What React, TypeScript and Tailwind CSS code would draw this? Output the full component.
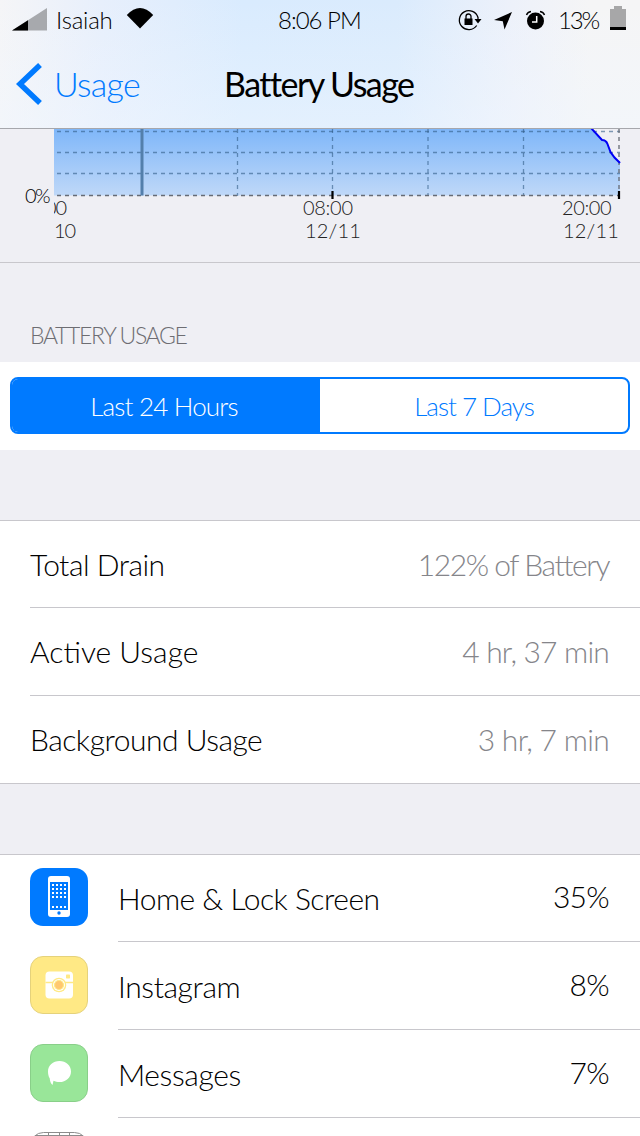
import React from "react";

const levels = [3.5, 24.5, 45.5];
const columns = [183.5, 278.5, 374, 469.5];

function StatusBar() {
  return (
    <div className="flex h-10 items-center text-[24px] font-light leading-10 text-black">
      <svg className="ml-3 mt-[-3px] h-6 w-[35px] shrink-0" viewBox="0 0 35 24">
        <path d="M0 23.500L35 1v22.500z" fill="#a7a9ad" />
        <path d="M0 23.500L16 13.200v10.300z" fill="#000" />
      </svg>
      <span className="ml-[9px] w-[70px] whitespace-nowrap tracking-[-0.2px]">Isaiah</span>
      <svg className="mt-[-4px] h-[22px] w-7 shrink-0" viewBox="0 0 28 22">
        <path d="M.8 8Q14-6 27.200 8L14 21.500z" fill="#000" />
      </svg>
      <span className="ml-[124px] w-[84px] whitespace-nowrap tracking-[-1px]">8:06 PM</span>
      <svg className="ml-[96px] h-6 w-6 shrink-0" viewBox="0 0 24 24" fill="none" stroke="#000" strokeWidth="1.300">
        <path d="M20 9.500a9.500 9.500 0 1 0-1.300 8M20 9v3" />
        <path d="M16.500 11h7L20 15.500z" fill="#000" stroke="none" />
        <path d="M6.500 10.500h8V17h-8z" fill="#000" stroke="none" />
        <path d="M8 11V8.500a2.500 2.500 0 0 1 5 0V11" />
      </svg>
      <svg className="ml-3 h-[19px] w-[19px] shrink-0" viewBox="0 0 19 19">
        <path d="M0 9L18 1 10.500 18.500 8.800 10.300z" fill="#000" />
      </svg>
      <svg className="ml-3 h-5 w-[21px] shrink-0" viewBox="0 0 21 20">
        <circle cx="10.500" cy="11" r="8.500" fill="#000" />
        <path d="M1.500 5Q2.500 2 6 1.500M19.500 5Q18.500 2 15 1.500" fill="none" stroke="#000" strokeWidth="1.400" />
        <path d="M11.700 6v6H7" fill="none" stroke="#fff" strokeWidth="1.500" />
      </svg>
      <span className="ml-[12px] w-[43px] whitespace-nowrap tracking-[-2.200px]">13%</span>
      <svg className="ml-[9px] mt-[-4px] h-6 w-4 shrink-0" viewBox="0 0 16 24">
        <path d="M4 0h8v3h4v18H0V3h4z" fill="#a7a7a8" />
        <path d="M0 21h16v3H0z" fill="#000" />
      </svg>
    </div>
  );
}

function Header() {
  return (
    <header className="h-[129px] border-b border-[#a6a7ac] bg-[linear-gradient(90deg,#f5f5f7_0%,#e7effc_16%,#d9ebfe_38%,#daebfd_62%,#edf1fa_80%,#f5f5f6_92%)]">
      <div className="h-[128px] bg-[linear-gradient(180deg,rgba(240,247,255,0),rgba(240,247,255,0.45))]">
        <StatusBar />
        <div className="flex h-[88px] items-start">
          <svg className="ml-4 mt-[22px] h-11 w-[27px] shrink-0" viewBox="0 0 27 44">
            <path d="M24 3L4 22l20 19" fill="none" stroke="#007aff" strokeWidth="5.500" />
          </svg>
          <span className="ml-[11px] mt-[20px] w-[170px] whitespace-nowrap text-[34px] font-light leading-[48px] tracking-[-0.700px] text-[#007aff]">Usage</span>
          <h1 className="mt-[20px] whitespace-nowrap text-[34px] font-normal leading-[48px] tracking-[-1.550px] text-black">Battery Usage</h1>
        </div>
      </div>
    </header>
  );
}

function Chart() {
  return (
    <section className="h-[134px] border-b border-[#c8c7cc] text-[20px] font-light text-black">
      <div className="flex h-[71px]">
        <div className="w-[54px] pl-[25px] pt-[54px] leading-6 tracking-[-1.500px]">0%</div>
        <svg className="h-[71px] w-[567px]" viewBox="0 0 567 71">
          <defs>
            <linearGradient id="area" x1="0" y1="0" x2="0" y2="1">
              <stop offset="0" stopColor="#7fb7f9" />
              <stop offset="1" stopColor="#bfd8f8" />
            </linearGradient>
          </defs>
          <path d="M0 0H537L548 11 552 12.500 557 23 561 28 566 34V66.500H0z" fill="url(#area)" />
          <g stroke="#315b85" strokeOpacity=".6" strokeWidth="1.300" strokeDasharray="4 4" fill="none">
            {levels.map((y) => <path key={y} d={`M3 ${y - 1}H566`} />)}
            {columns.map((x) => <path key={x} d={`M${x} 0V67`} />)}
          </g>
          <path d="M3 66.500H566M565 0V66" stroke="#666b75" strokeWidth="1.300" strokeDasharray="4 4" fill="none" />
          <path d="M88 0V66.500" stroke="#537fab" strokeWidth="3" />
          <path d="M537 -1L548 11q4 0 5.500 4l3 8 4 5.500L566 34" fill="none" stroke="#0000f5" strokeWidth="2" />
          <path d="M278.500 62v8M565 62v8" stroke="#000" strokeWidth="2.200" />
        </svg>
      </div>
      <div className="ml-[54px] mt-[-4px] flex overflow-hidden whitespace-nowrap leading-[23px] text-[#222]">
        <div className="w-[249px] shrink-0 tracking-[-1px]">
          <div className="ml-[-9px]">00</div>
          <div>10</div>
        </div>
        <div className="w-[259px] shrink-0">
          <div className="tracking-[-0.300px]">08:00</div>
          <div className="ml-[2px] tracking-[0.200px]">12/11</div>
        </div>
        <div>
          <div className="tracking-[-0.400px]">20:00</div>
          <div className="ml-px tracking-[0.200px]">12/11</div>
        </div>
      </div>
    </section>
  );
}

function Segments() {
  return (
    <div className="bg-white px-[10px] pb-4 pt-[15px]">
      <div className="flex h-[57px] overflow-hidden rounded-lg border-2 border-[#007aff] text-center text-[26px] font-light leading-[52px]">
        <button className="w-[308px] bg-[#007aff] pr-1 tracking-[-0.800px] text-white">Last 24 Hours</button>
        <button className="flex-1 tracking-[-1px] text-[#007aff]">Last 7 Days</button>
      </div>
    </div>
  );
}

const stats = [
  { label: "Total Drain", value: "122% of Battery", labelStyle: "tracking-[-0.500px]", valueStyle: "tracking-[-1.450px]" },
  { label: "Active Usage", value: "4 hr, 37 min", labelStyle: "tracking-[0px]", valueStyle: "tracking-[-0.800px]" },
  { label: "Background Usage", value: "3 hr, 7 min", labelStyle: "tracking-[-0.500px]", valueStyle: "tracking-[-0.700px]" },
];

function Stats() {
  return (
    <section className="border-y border-[#c8c7cc] bg-white pl-[30px]">
      {stats.map(({ label, value, labelStyle, valueStyle }) => (
        <div key={label} className="flex h-[88px] items-center justify-between whitespace-nowrap border-b border-[#c8c7cc] pr-[31px] text-[30px] font-light first:h-[87px] last:h-[87px] last:border-0">
          <span className={`text-black ${labelStyle}`}>{label}</span>
          <span className={`text-[#85858a] ${valueStyle}`}>{value}</span>
        </div>
      ))}
    </section>
  );
}

function PhoneIcon() {
  return (
    <svg className="h-[58px] w-[58px]" viewBox="0 0 58 58">
      <rect width="58" height="58" rx="13" fill="#007aff" />
      <rect x="18" y="8" width="22" height="41" rx="3" fill="#fff" />
      <path d="M20 14h18v28H20z" fill="#007aff" />
      <path d="M22 17h14M22 21h14M22 25h14M22 29h14M22 39h14" stroke="#fff" strokeWidth="2" strokeDasharray="2 2" />
      <circle cx="29" cy="45" r="1.700" fill="#007aff" />
    </svg>
  );
}

function CameraIcon() {
  return (
    <svg className="h-[58px] w-[58px]" viewBox="0 0 58 58">
      <rect x=".5" y=".5" width="57" height="57" rx="12.500" fill="#ffe985" stroke="#e5d27b" />
      <rect x="15.500" y="15.500" width="27.500" height="27" rx="4" fill="#fff" />
      <path d="M15.500 26.500h27.500" stroke="#ffe985" strokeWidth="1.500" />
      <circle cx="29" cy="29" r="7.300" fill="#ffe985" />
      <circle cx="29" cy="29" r="6" fill="#fff" />
      <circle cx="29" cy="29" r="4.500" fill="#ffc870" stroke="#ffe985" strokeWidth="1.200" />
      <rect x="36" y="18.500" width="4" height="4" rx=".7" fill="#ffe985" />
    </svg>
  );
}

function BubbleIcon() {
  return (
    <svg className="h-[58px] w-[58px]" viewBox="0 0 58 58">
      <rect x=".5" y=".5" width="57" height="57" rx="12.500" fill="#99e699" stroke="#89cf89" />
      <path d="M29.500 17c6.400 0 11.500 4.300 11.500 10.400S36 38 29.500 38c-2.200 0-4.200-.3-6-1.200L22.500 41c-1.700-1.500-2.600-4-2.800-6.800-1.100-1.600-1.700-4-1.700-6.800C18 21.300 23 17 29.500 17z" fill="#fff" />
    </svg>
  );
}

const apps = [
  { name: "Home & Lock Screen", share: "35%", Icon: PhoneIcon, nameStyle: "tracking-[-0.500px]" },
  { name: "Instagram", share: "8%", Icon: CameraIcon, nameStyle: "tracking-[-0.400px]" },
  { name: "Messages", share: "7%", Icon: BubbleIcon, nameStyle: "tracking-[-0.400px]" },
];

function Apps() {
  return (
    <section className="h-[282px] overflow-hidden border-t border-[#c8c7cc] bg-white pl-[30px]">
      {apps.map(({ name, share, Icon, nameStyle }, i) => (
        <div key={name} className={i === 0 ? "flex h-[87px]" : "flex h-[88px]"}>
          <div className={i === 0 ? "w-[88px] pt-[13px]" : "w-[88px] pt-[14px]"}><Icon /></div>
          <div className="flex flex-1 items-center justify-between whitespace-nowrap border-b border-[#c8c7cc] pr-[31px] text-[30px] font-light text-black">
            <span className={`pt-px ${nameStyle}`}>{name}</span>
            <span className="pb-[3px] tracking-[-0.700px]">{share}</span>
          </div>
        </div>
      ))}
      <svg className="mt-[14px] h-[58px] w-[58px]" viewBox="0 0 58 58" fill="none" stroke="#8c8c8c">
        <rect x=".5" y=".5" width="57" height="57" rx="13" />
        <path d="M5 3.500h48M18.500 0v58M29.500 0v58M39.500 0v58" />
      </svg>
    </section>
  );
}

export default function App() {
  return (
    <main className="h-[1136px] w-[640px] overflow-hidden bg-[#efeff4] font-['Lato',sans-serif]">
      <Header />
      <Chart />
      <h2 className="h-[99px] pl-[30px] pt-[56px] text-[23px] font-light leading-8 tracking-[-1.350px] text-[#6d6d72]">BATTERY USAGE</h2>
      <Segments />
      <div className="h-[70px]" />
      <Stats />
      <div className="h-[70px]" />
      <Apps />
    </main>
  );
}
